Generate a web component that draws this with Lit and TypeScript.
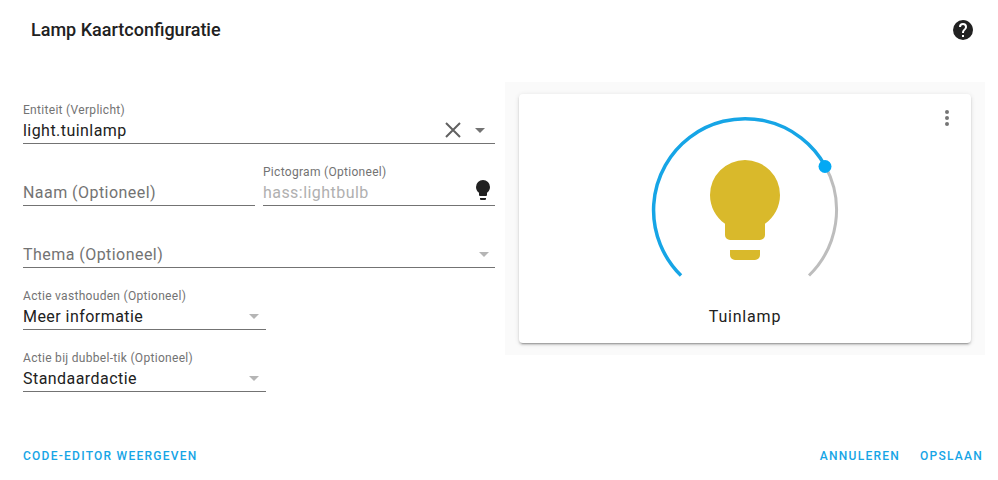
import { LitElement, html, css, svg } from 'lit';
import { customElement, property } from 'lit/decorators.js';

const caret = (cls: string) => html`<svg class="caret ${cls}" width="24" height="24" viewBox="0 0 24 24"><path d="M7 10l5 5 5-5z"></path></svg>`;

@customElement('paper-field')
export class PaperField extends LitElement {
  static styles = css`
    :host {
      display: block;
      height: 62px;
      box-sizing: border-box;
      font-family: Roboto, sans-serif;
    }

    .box {
      height: 100%;
      box-sizing: border-box;
      display: flex;
      flex-direction: column;
      justify-content: flex-end;
      border-bottom: 1px solid #737373;
    }

    .label {
      font-size: 12px;
      line-height: 15px;
      letter-spacing: 0.3px;
      color: #737373;
    }

    .value {
      display: flex;
      align-items: center;
      height: 24px;
      margin-bottom: 1px;
      font-size: 16px;
      letter-spacing: 0.45px;
      color: #212121;
    }

    .text {
      flex: 1;
      white-space: nowrap;
    }

    .floating {
      color: #737373;
    }

    .hint {
      color: #b0b0b0;
    }
  `;

  @property() label = '';
  @property() value = '';
  @property() placeholder = '';
  @property() hint = '';

  render() {
    return html`
      <div class="box">
        ${this.label ? html`<div class="label">${this.label}</div>` : ''}
        <div class="value">
          ${this.placeholder
            ? html`<span class="text floating">${this.placeholder}</span>`
            : this.hint
              ? html`<span class="text hint">${this.hint}</span>`
              : html`<span class="text">${this.value}</span>`}
          <slot></slot>
        </div>
      </div>
    `;
  }
}

@customElement('app-root')
export class AppRoot extends LitElement {
  static styles = css`
    :host {
      display: block;
      width: 998px;
      height: 480px;
      background: #fff;
      font-family: Roboto, sans-serif;
      color: #212121;
      overflow: hidden;
    }

    .head {
      display: flex;
      align-items: center;
      justify-content: space-between;
      height: 60px;
      padding: 0 23px 0 31px;
    }

    .title {
      font-size: 18px;
      font-weight: 500;
      padding-bottom: 2px;
    }

    .main {
      display: flex;
      align-items: flex-start;
      padding: 22px 13px 0 23px;
      gap: 10px;
    }

    .form {
      width: 472px;
      display: grid;
      grid-template-columns: 1fr 1fr;
      column-gap: 8px;
    }

    .wide {
      grid-column: 1 / 3;
    }

    .short {
      grid-column: 1 / 3;
      width: 243px;
    }

    .caret {
      flex: none;
      fill: #737373;
      margin-right: 3px;
    }

    .caret.theme {
      fill: #b5b5b5;
      margin-right: -1px;
    }

    .caret.action {
      fill: #b5b5b5;
      margin-right: 0;
    }

    .clear {
      flex: none;
      margin-right: 3px;
      stroke: #616161;
      stroke-width: 2;
      fill: none;
    }

    .bulb-small {
      flex: none;
      fill: #212121;
      margin-top: -4px;
    }

    .preview {
      width: 480px;
      height: 273px;
      box-sizing: border-box;
      padding: 12px 14px;
      background: #fafafa;
    }

    .card {
      height: 249px;
      background: #fff;
      border-radius: 4px;
      box-shadow: 0 2px 2px 0 rgba(0, 0, 0, 0.14), 0 1px 5px 0 rgba(0, 0, 0, 0.12), 0 3px 1px -2px rgba(0, 0, 0, 0.2);
      position: relative;
      display: flex;
      flex-direction: column;
      align-items: center;
    }

    .gauge {
      display: block;
      margin-top: 20px;
    }

    .name {
      margin-top: 21px;
      font-size: 16px;
      letter-spacing: 0.8px;
      line-height: 24px;
    }

    .more {
      position: absolute;
      top: 12px;
      right: 8px;
      fill: #757575;
    }

    .actions {
      display: flex;
      align-items: center;
      gap: 20px;
      padding: 0 15px 0 23px;
      margin-top: 57px;
      font-size: 12px;
      font-weight: 500;
      letter-spacing: 1.25px;
      color: #16a5e6;
    }

    .spacer {
      flex: 1;
    }
  `;

  render() {
    return html`
      <div class="head">
        <div class="title">Lamp Kaartconfiguratie</div>
        <svg width="24" height="24" viewBox="0 0 24 24" fill="#212121"><path d="M15.07,11.25L14.17,12.17C13.45,12.89 13,13.5 13,15H11V14.5C11,13.39 11.45,12.39 12.17,11.67L13.41,10.41C13.78,10.05 14,9.55 14,9C14,7.89 13.1,7 12,7A2,2 0 0,0 10,9H8A4,4 0 0,1 12,5A4,4 0 0,1 16,9C16,9.88 15.64,10.67 15.07,11.25M13,19H11V17H13M12,2A10,10 0 0,0 2,12A10,10 0 0,0 12,22A10,10 0 0,0 22,12C22,6.47 17.5,2 12,2Z"></path></svg>
      </div>
      <div class="main">
        <div class="form">
          <paper-field class="wide" label="Entiteit (Verplicht)" value="light.tuinlamp">
            <svg class="clear" width="24" height="24" viewBox="0 0 24 24"><path d="M5 5L19 19M19 5L5 19"></path></svg>
            ${caret('')}
          </paper-field>
          <paper-field placeholder="Naam (Optioneel)"></paper-field>
          <paper-field label="Pictogram (Optioneel)" hint="hass:lightbulb">
            <svg class="bulb-small" width="24" height="24" viewBox="0 0 24 24"><path d="M12,2A7,7 0 0,0 5,9C5,11.38 6.19,13.47 8,14.74V17A1,1 0 0,0 9,18H15A1,1 0 0,0 16,17V14.74C17.81,13.47 19,11.38 19,9A7,7 0 0,0 12,2M9,21A1,1 0 0,0 10,22H14A1,1 0 0,0 15,21V20H9V21Z"></path></svg>
          </paper-field>
          <paper-field class="wide" placeholder="Thema (Optioneel)">${caret('theme')}</paper-field>
          <paper-field class="short" label="Actie vasthouden (Optioneel)" value="Meer informatie">${caret('action')}</paper-field>
          <paper-field class="short" label="Actie bij dubbel-tik (Optioneel)" value="Standaardactie">${caret('action')}</paper-field>
        </div>
        <div class="preview">
          <div class="card">
            <svg class="gauge" width="200" height="170" viewBox="0 0 200 170">
              ${svg`
                <path d="M180.2 52A91.5 91.5 0 0 1 164 161.5" fill="none" stroke="#bdbdbd" stroke-width="3"></path>
                <path d="M36 161.5A91.5 91.5 0 1 1 180.2 52" fill="none" stroke="#16a5e6" stroke-width="3.5"></path>
                <circle cx="180" cy="52.5" r="6.5" fill="#03a9f4"></circle>
                <g transform="translate(40 36) scale(5)" fill="#d9b92b">
                  <path d="M12,2A7,7 0 0,0 5,9C5,11.38 6.19,13.47 8,14.74V17A1,1 0 0,0 9,18H15A1,1 0 0,0 16,17V14.74C17.81,13.47 19,11.38 19,9A7,7 0 0,0 12,2M9,21A1,1 0 0,0 10,22H14A1,1 0 0,0 15,21V20H9V21Z"></path>
                </g>
              `}
            </svg>
            <div class="name">Tuinlamp</div>
            <svg class="more" width="32" height="24" viewBox="0 0 32 24"><path d="M16,16A2,2 0 0,1 18,18A2,2 0 0,1 16,20A2,2 0 0,1 14,18A2,2 0 0,1 16,16M16,10A2,2 0 0,1 18,12A2,2 0 0,1 16,14A2,2 0 0,1 14,12A2,2 0 0,1 16,10M16,4A2,2 0 0,1 18,6A2,2 0 0,1 16,8A2,2 0 0,1 14,6A2,2 0 0,1 16,4Z"></path></svg>
          </div>
        </div>
      </div>
      <div class="actions">
        <span>CODE-EDITOR WEERGEVEN</span>
        <span class="spacer"></span>
        <span>ANNULEREN</span>
        <span>OPSLAAN</span>
      </div>
    `;
  }
}
